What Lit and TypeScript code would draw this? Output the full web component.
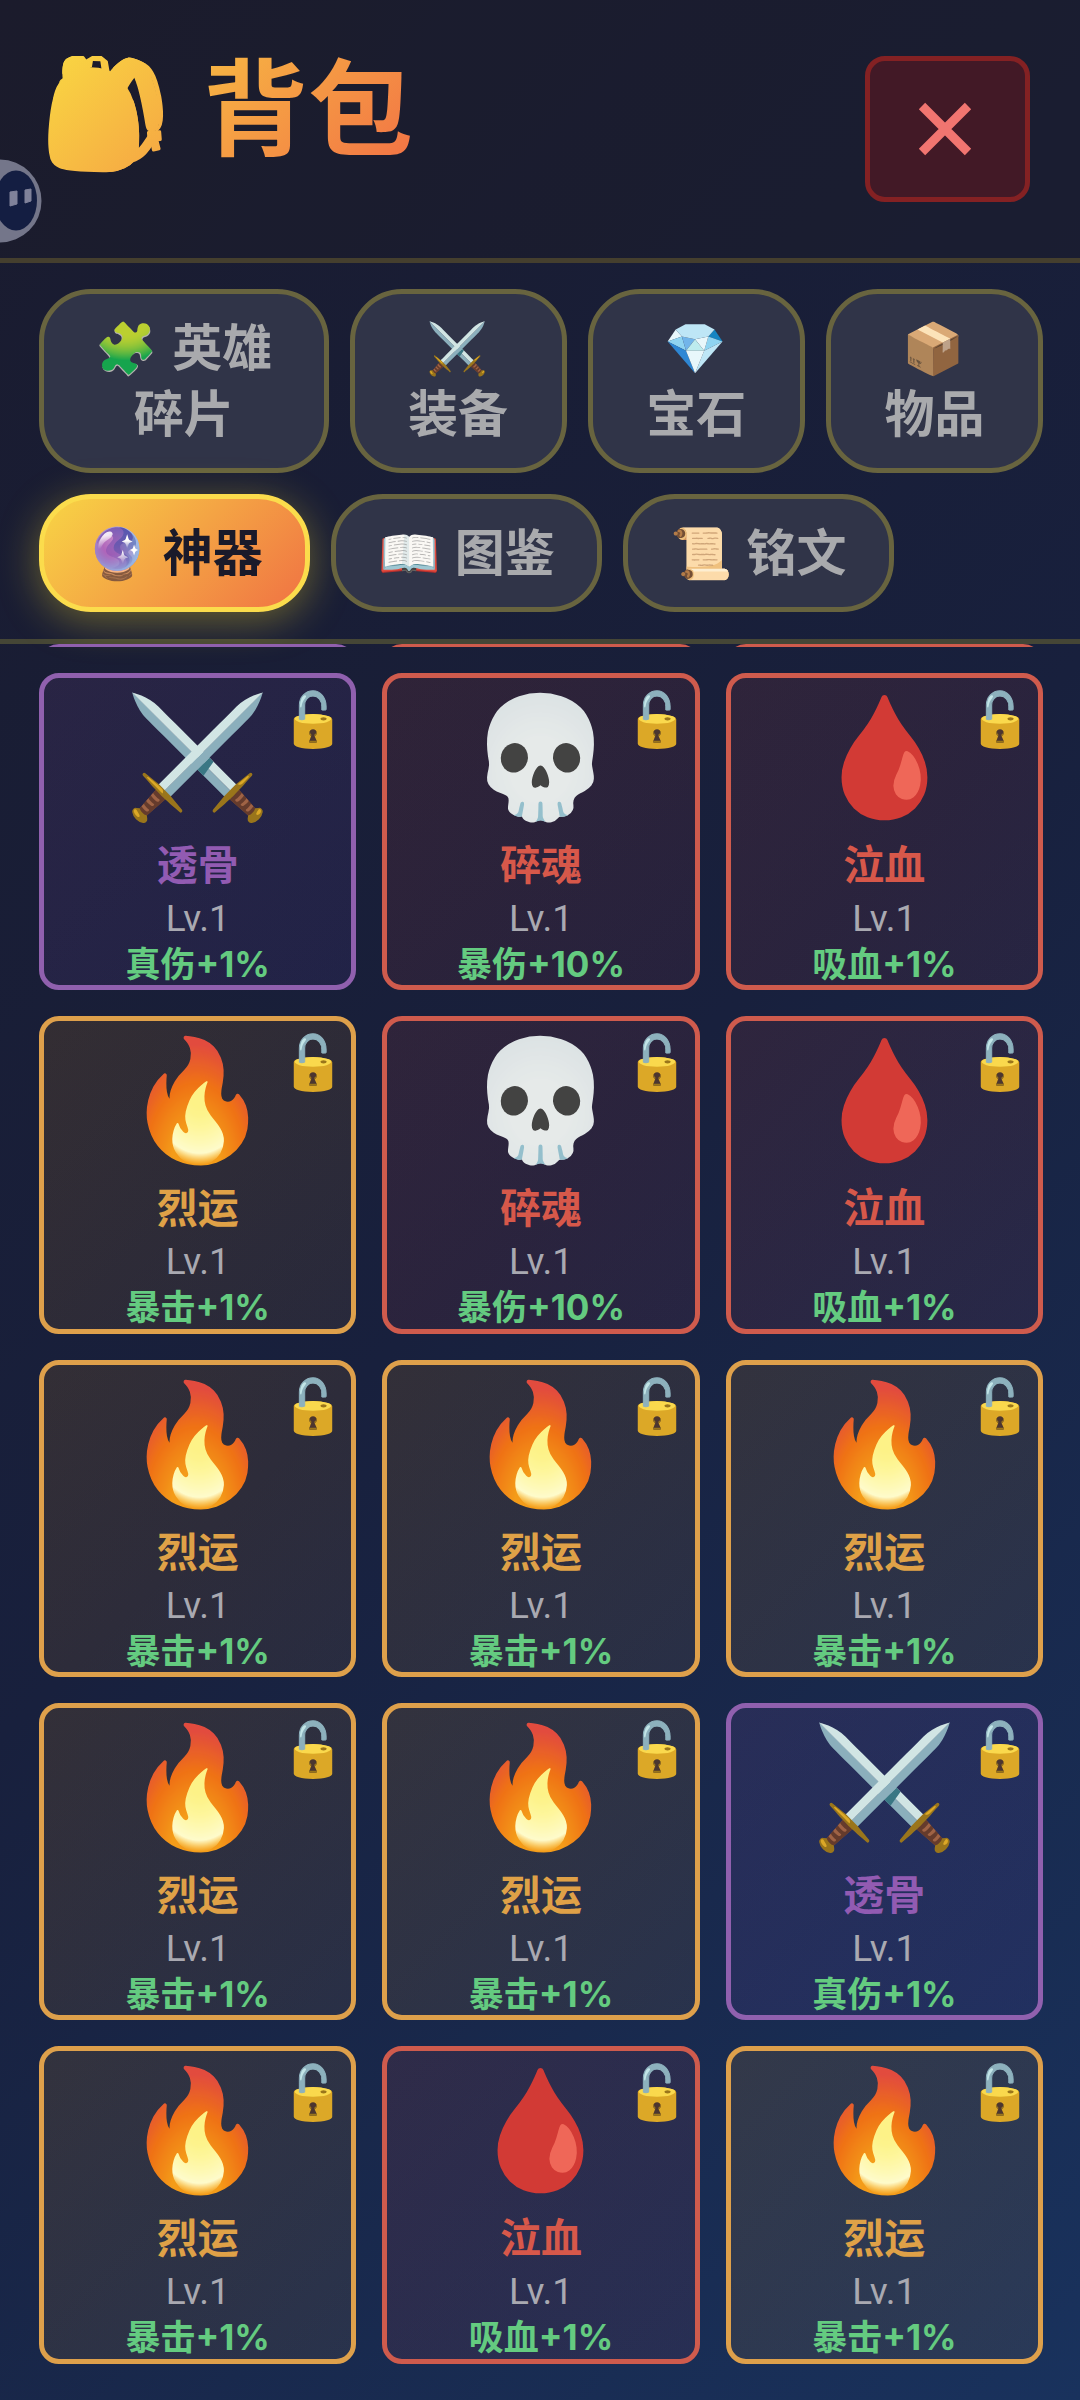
import { LitElement, html, css } from "lit";
import { customElement, state } from "lit/decorators.js";
import { classMap } from "lit/directives/class-map.js";

type Tone = "purple" | "red" | "orange";

interface Artifact {
  icon: string;
  name: string;
  stat: string;
  tone: Tone;
}

interface Tab {
  id: string;
  icon: string;
  /* Words of the label; a line may break between them, never inside one. */
  words: string[];
}

const PIERCE: Artifact = { icon: "⚔️", name: "透骨", stat: "真伤+1%", tone: "purple" };
const SOUL: Artifact = { icon: "💀", name: "碎魂", stat: "暴伤+10%", tone: "red" };
const BLOOD: Artifact = { icon: "🩸", name: "泣血", stat: "吸血+1%", tone: "red" };
const FIRE: Artifact = { icon: "🔥", name: "烈运", stat: "暴击+1%", tone: "orange" };

const ARTIFACTS: Artifact[] = [
  PIERCE, SOUL, BLOOD,
  FIRE, SOUL, BLOOD,
  FIRE, FIRE, FIRE,
  FIRE, FIRE, PIERCE,
  FIRE, BLOOD, FIRE,
];

/* Tones of the row that is scrolled away under the tab bar. */
const SCROLLED_ROW: Tone[] = ["purple", "red", "red"];

const WIDE_TABS: Tab[] = [
  { id: "shards", icon: "🧩", words: ["英雄", "碎片"] },
  { id: "gear", icon: "⚔️", words: ["装备"] },
  { id: "gems", icon: "💎", words: ["宝石"] },
  { id: "items", icon: "📦", words: ["物品"] },
];

const COMPACT_TABS: Tab[] = [
  { id: "artifacts", icon: "🔮", words: ["神器"] },
  { id: "codex", icon: "📖", words: ["图鉴"] },
  { id: "runes", icon: "📜", words: ["铭文"] },
];

@customElement("app-root")
export class AppRoot extends LitElement {
  @state() private active = "artifacts";

  static styles = css`
    :host {
      display: block;
      font-family: "Inter", "Noto Sans CJK SC", sans-serif;
    }
    * {
      box-sizing: border-box;
    }
    button {
      margin: 0;
      font-family: inherit;
      cursor: pointer;
    }
    .page {
      position: relative;
      min-height: 100vh;
      padding-bottom: 37px;
      overflow: hidden;
      background: linear-gradient(135deg, #1a1b2e 0%, #18203d 50%, #19325d 100%);
    }

    .head {
      display: flex;
      justify-content: space-between;
      align-items: flex-start;
      padding: 56px 50px 56px 39px;
      border-bottom: 5px solid #453f2e;
      background: rgba(27, 27, 41, 0.5);
    }
    .title {
      display: flex;
      align-items: flex-start;
      gap: 31px;
      margin: 0;
      font-size: 105px;
      font-weight: 700;
      line-height: 106px;
      padding-bottom: 10px;
      background: linear-gradient(135deg, #f9d942, #f27045);
      -webkit-background-clip: text;
      background-clip: text;
      color: transparent;
    }
    .bag {
      font-size: 107px;
      line-height: 110px;
    }
    .close {
      display: grid;
      place-items: center;
      width: 165px;
      height: 146px;
      padding: 0 6px 0 0;
      border: 5px solid #842123;
      border-radius: 20px;
      background: #421926;
    }
    .close-icon {
      width: 54px;
      height: 54px;
    }

    .buddy {
      position: absolute;
      left: 0;
      top: 158px;
      width: 44px;
      height: 86px;
      padding: 0;
      border: 0;
      background: none;
    }
    .buddy-face {
      display: block;
      width: 44px;
      height: 86px;
    }

    .tabs {
      display: grid;
      gap: 21px;
      padding: 26px 37px 27px 39px;
      border-bottom: 5px solid #454636;
    }
    .tab-row {
      display: flex;
      gap: 21px;
    }
    .tab-row.wide {
      display: grid;
      grid-template-columns: 4fr 3fr 3fr 3fr;
    }
    .tab {
      padding: 21px 42px;
      border: 5px solid #68643f;
      border-radius: 52px;
      background: #303448;
      color: #a9aaad;
      font-size: 50px;
      font-weight: 700;
      line-height: 66px;
    }
    .tab.active {
      border-color: #fbdc4c;
      background: linear-gradient(135deg, #f8d745, #f07043);
      background-origin: border-box;
      color: #1a1a2a;
      box-shadow: 0 8px 40px rgba(255, 225, 40, 0.36);
    }
    .tab-icon {
      margin-right: 3px;
    }
    .word {
      white-space: nowrap;
    }
    .emoji {
      filter: sepia(0.06) saturate(0.9);
    }

    .peek,
    .grid {
      display: grid;
      grid-template-columns: repeat(3, 1fr);
      column-gap: 26px;
      padding: 0 37px 0 39px;
    }
    .peek {
      height: 3px;
      margin-bottom: 26px;
      align-items: end;
      overflow: hidden;
    }
    .peek-card {
      height: 60px;
      border: 5px solid var(--edge);
      border-radius: 20px;
    }
    .grid {
      row-gap: 26px;
      margin: 0;
      list-style: none;
    }
    .card {
      position: relative;
      display: flex;
      flex-direction: column;
      align-items: center;
      aspect-ratio: 1;
      padding-top: 11px;
      border: 5px solid var(--edge);
      border-radius: 20px;
      background: linear-gradient(135deg, var(--glow), var(--fade));
      background-origin: border-box;
      overflow: hidden;
    }
    .purple {
      --edge: #9060ae;
      --ink: #925bb2;
      --glow: rgba(155, 89, 182, 0.12);
      --fade: rgba(110, 70, 190, 0.1);
    }
    .red {
      --edge: #cf5b4d;
      --ink: #d7584a;
      --glow: rgba(231, 76, 60, 0.11);
      --fade: rgba(210, 60, 70, 0.08);
    }
    .orange {
      --edge: #dea04b;
      --ink: #dfa147;
      --glow: rgba(243, 156, 18, 0.12);
      --fade: rgba(230, 150, 50, 0.08);
    }
    .art {
      margin-bottom: 16px;
      font-size: 118px;
      line-height: 132px;
    }
    .name {
      margin: 0;
      color: var(--ink);
      font-size: 41px;
      font-weight: 700;
      line-height: 56px;
    }
    .level {
      color: #a9a9b1;
      font-family: "Roboto", sans-serif;
      font-size: 37px;
      font-weight: 400;
      line-height: 52px;
    }
    .stat {
      color: #64cb80;
      font-size: 35px;
      font-weight: 700;
      line-height: 39px;
    }
    .lock {
      position: absolute;
      top: 12px;
      right: 5px;
      padding: 0;
      border: 0;
      background: none;
      font-size: 53px;
      line-height: 59px;
    }
  `;

  private renderTab(tab: Tab) {
    const active = tab.id === this.active;
    return html`<button
      class=${classMap({ tab: true, active })}
      type="button"
      role="tab"
      aria-selected=${active ? "true" : "false"}
      @click=${() => (this.active = tab.id)}
    ><span class="tab-icon emoji">${tab.icon}</span> ${tab.words.map((w) => html`<span class="word">${w}</span><wbr>`)}</button>`;
  }

  private renderCard(a: Artifact) {
    return html`<li class="card ${a.tone}">
      <span class="art emoji">${a.icon}</span>
      <h2 class="name">${a.name}</h2>
      <span class="level">Lv.1</span>
      <span class="stat">${a.stat}</span>
      <button class="lock emoji" type="button">🔓</button>
    </li>`;
  }

  render() {
    return html`<div class="page">
      <header class="head">
        <h1 class="title"><span class="bag">🎒</span><span>背包</span></h1>
        <button class="close" type="button">
          <svg class="close-icon" viewBox="0 0 54 54" aria-hidden="true">
            <path d="M4 4 50 50M50 4 4 50" fill="none" stroke="#f17570" stroke-width="9" />
          </svg>
        </button>
      </header>

      <nav class="tabs" role="tablist">
        <div class="tab-row wide">${WIDE_TABS.map((t) => this.renderTab(t))}</div>
        <div class="tab-row">${COMPACT_TABS.map((t) => this.renderTab(t))}</div>
      </nav>

      <main>
        <div class="peek">${SCROLLED_ROW.map((tone) => html`<div class="peek-card ${tone}"></div>`)}</div>
        <ul class="grid">${ARTIFACTS.map((a) => this.renderCard(a))}</ul>
      </main>

      <button class="buddy" type="button">
        <svg class="buddy-face" viewBox="0 0 44 86" aria-hidden="true">
          <circle cx="0" cy="43" r="41.500" fill="#74768a" />
          <ellipse cx="16" cy="42.500" rx="21" ry="30" fill="#141e42" />
          <path d="M10 34 17 33V46L10 48ZM25 32 31 31V43L25 45Z" fill="#80829a" stroke="#80829a" stroke-linejoin="round" />
        </svg>
      </button>
    </div>`;
  }
}
